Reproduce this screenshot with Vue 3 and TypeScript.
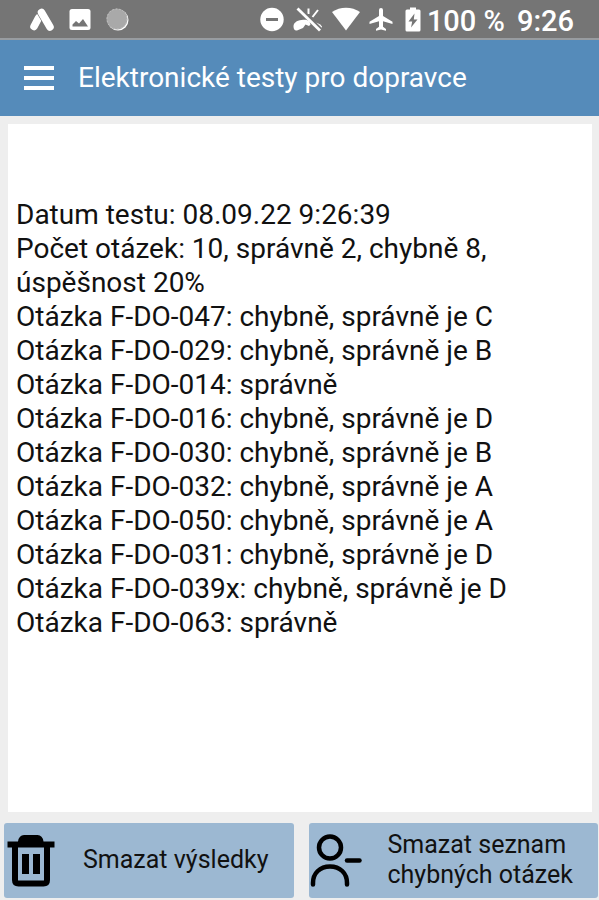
<script setup lang="ts">
interface Answer {
  code: string
  correct?: string
}

const summary: string[] = [
  'Datum testu: 08.09.22 9:26:39',
  'Počet otázek: 10, správně 2, chybně 8, úspěšnost 20%',
]

const answers: Answer[] = [
  { code: 'F-DO-047', correct: 'C' },
  { code: 'F-DO-029', correct: 'B' },
  { code: 'F-DO-014' },
  { code: 'F-DO-016', correct: 'D' },
  { code: 'F-DO-030', correct: 'B' },
  { code: 'F-DO-032', correct: 'A' },
  { code: 'F-DO-050', correct: 'A' },
  { code: 'F-DO-031', correct: 'D' },
  { code: 'F-DO-039x', correct: 'D' },
  { code: 'F-DO-063' },
]

const describe = (a: Answer): string =>
  `Otázka ${a.code}: ` + (a.correct ? `chybně, správně je ${a.correct}` : 'správně')
</script>

<template>
  <div class="screen">
    <div class="status">
      <div class="group notices">
        <svg width="26" height="24" viewBox="0 0 26 24" aria-hidden="true">
          <g stroke-linecap="round" fill="none">
            <path d="M9.500 11 5 19.500" stroke="#fff" stroke-width="7.500" />
            <path d="M12.500 5.500 21 20" stroke="#757575" stroke-width="8.800" />
            <path d="M12.500 5.500 21 20" stroke="#fff" stroke-width="7.500" />
          </g>
        </svg>
        <svg width="22" height="24" viewBox="0 0 22 24" aria-hidden="true">
          <rect x="0.5" y="2" width="21" height="21" rx="2.500" fill="#fff" />
          <path d="M3.500 19.500v-2l3.500-3.500 3 2.500 4-4.500 5 7.500Z" fill="#757575" />
        </svg>
        <svg width="24" height="24" viewBox="0 0 24 24" aria-hidden="true">
          <circle cx="13" cy="13" r="10.500" fill="#fff" />
          <circle cx="12" cy="12" r="10.500" fill="#a9a9a9" />
          <circle cx="12" cy="12" r="10" fill="none" stroke="#c4c4c4" stroke-dasharray="1.500 2" />
        </svg>
      </div>
      <div class="group system">
        <svg width="24" height="24" viewBox="0 0 24 24" aria-hidden="true">
          <circle cx="12" cy="12.500" r="11.700" fill="#fff" />
          <path d="M6 12.500h12" stroke="#757575" stroke-width="3" />
        </svg>
        <svg width="30" height="24" viewBox="0 0 30 24" aria-hidden="true">
          <path d="M.5 19.500c0-3.500 3-6 8-6.500 4-.5 6-.2 8 1.500l1 3-1.500 1.500-3.500-1.500-2.500 3.500-6 2.500C2 24 .5 22.500.5 19.500Z" fill="#fff" />
          <path d="M19 14.500c4 .8 8 2 10 5-.3 1.500-1 2.500-2 3.500Z" fill="#fff" />
          <path d="M15.500 1.500V7M25 3l-5.500 7" stroke="#fff" stroke-width="2" />
          <path d="m6 .8 22 21.800" stroke="#757575" stroke-width="3.500" />
          <path d="m4.500 1.500 22.500 22" stroke="#fff" stroke-width="2.800" />
        </svg>
        <svg width="28" height="24" viewBox="0 0 28 24" aria-hidden="true">
          <path d="M0 5C8-.8 20-.8 28 5L14 23.500Z" fill="#fff" />
        </svg>
        <svg width="24" height="24" viewBox="0 0 24 24" aria-hidden="true">
          <path
            d="M23.500 17v-2.200L14 9V3a2 2 0 0 0-4 0v6L.5 14.800V17l9.500-2.800v5.600L7 22v1.800l5-1.200 5 1.200V22l-3-2.200v-5.600Z"
            fill="#fff"
          />
        </svg>
        <span class="power">
          <svg width="16" height="24" viewBox="0 0 16 24" aria-hidden="true">
            <path d="M5 .5h6v2h3q1.500 0 1.500 1.500v19q0 1.500-1.500 1.500H2Q.5 24.500.5 23V4Q.5 2.500 2 2.500h3Z" fill="#fff" />
            <path d="m9.500 6.500-6 8h3.700l-1.200 6 6.500-8H8.800Z" fill="#757575" />
          </svg>
          <span class="value">100 %</span>
        </span>
        <span class="value clock">9:26</span>
      </div>
    </div>

    <header class="bar">
      <button class="menu" type="button" aria-label="Menu">
        <svg width="30" height="26" viewBox="0 0 30 26" aria-hidden="true">
          <path d="M0 3h30M0 13h30M0 23h30" stroke="#fff" stroke-width="4" />
        </svg>
      </button>
      <h1>Elektronické testy pro dopravce</h1>
    </header>

    <main class="results">
      <p v-for="line in summary" :key="line">{{ line }}</p>
      <p v-for="a in answers" :key="a.code">{{ describe(a) }}</p>
    </main>

    <footer class="actions">
      <button class="action" type="button">
        <svg width="54" height="52" viewBox="0 0 54 52" aria-hidden="true">
          <path d="M1.500 6.500h10.500Q13 0 18 0h13.500q5 0 6 6.500H48.500V12.500h-47Z" />
          <path d="M9 11v34q0 3.500 3.500 3.500h25q3.500 0 3.500-3.500V11" fill="none" stroke="#000" stroke-width="6" />
          <path d="M16 19h7v20h-7ZM27 19h7v20h-7Z" />
        </svg>
        <span class="label">Smazat výsledky</span>
      </button>
      <button class="action" type="button">
        <svg width="54" height="52" viewBox="0 0 54 52" aria-hidden="true">
          <g fill="none" stroke="#000" stroke-width="4.500" stroke-linecap="round">
            <circle cx="19" cy="12.500" r="11" />
            <path d="M2 49.500V48C2 38 9 31.500 19 31.500S36 38 36 48v1.500" />
            <path d="M36 25.500h12.500" />
          </g>
        </svg>
        <span class="label">Smazat seznam chybných otázek</span>
      </button>
    </footer>
  </div>
</template>

<style>
body {
  margin: 0;
  background: #eee;
}
</style>

<style scoped>
.screen {
  display: flex;
  flex-direction: column;
  min-height: 100vh;
  box-sizing: border-box;
  padding-bottom: 2px;
  background: #eee;
  font-family: Roboto, "Liberation Sans", sans-serif;
  color: #111;
}

svg {
  display: block;
  flex: none;
  overflow: visible;
}

.status {
  display: flex;
  align-items: center;
  justify-content: space-between;
  height: 38px;
  padding: 0 25px 0 29px;
  border-bottom: 2px solid #989ca0;
  background: #757575;
  color: #fff;
  font-size: 29px;
  font-weight: 500;
  line-height: 38px;
}

.group,
.power {
  display: flex;
  align-items: center;
}

.notices {
  gap: 14px;
}

.system {
  gap: 9px;
}

.power {
  gap: 6px;
  padding: 0 3px;
}

.value {
  white-space: nowrap;
  padding-top: 3px;
}

.bar {
  display: flex;
  align-items: center;
  gap: 24px;
  height: 76px;
  padding: 0 24px;
  background: #558bba;
  color: #fff;
}

.menu {
  padding: 0;
  border: 0;
  background: none;
}

h1 {
  margin: 0;
  font-size: 28px;
  font-weight: 400;
  line-height: 34px;
}

.results {
  flex: 1;
  margin: 8px 7px 0 8px;
  padding: 74px 8px;
  background: #fff;
  font-size: 28px;
  line-height: 34px;
}

p {
  margin: 0;
}

.actions {
  display: grid;
  grid-template-columns: 1fr 1fr;
  gap: 15px;
  margin: 11px 1px 0 4px;
}

.action {
  display: flex;
  align-items: center;
  min-height: 75px;
  padding: 0 2px;
  border: 0;
  border-radius: 3px;
  background: #9cb8d2;
  color: #111;
  font-family: inherit;
  font-size: 25px;
  line-height: 30px;
  text-align: left;
}

.label {
  padding: 0 0 1px 23px;
}
</style>
